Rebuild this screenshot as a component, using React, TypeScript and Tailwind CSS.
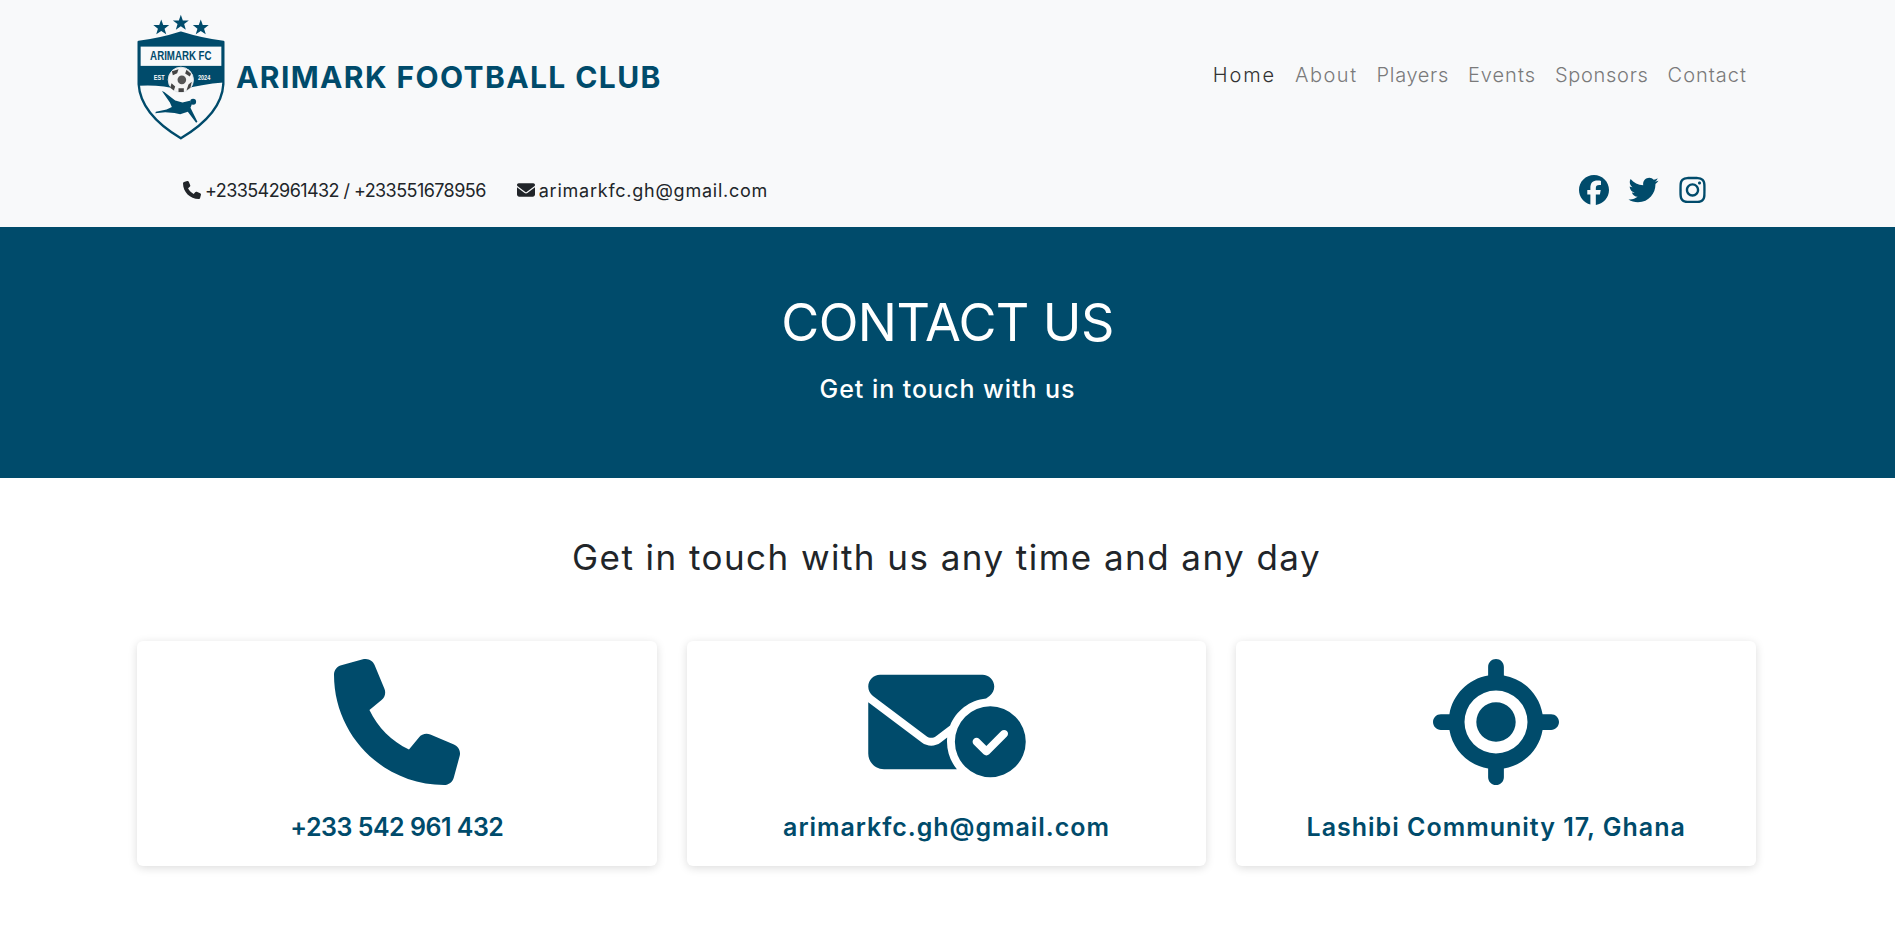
import { FaPhone, FaEnvelope, FaFacebook, FaTwitter, FaInstagram, FaEnvelopeCircleCheck, FaLocationCrosshairs } from "react-icons/fa6";

const C = "#004b6b";

function Logo() {
  return (
    <svg width="88" height="127" viewBox="35 25 265 380" className="shrink-0">
      <g fill={C}>
        <polygon points="108,40 114,57 132,57 118,68 123,85 108,75 93,85 98,68 84,57 102,57" />
        <polygon points="167,26 173,43 191,43 177,54 182,71 167,61 152,71 157,54 143,43 161,43" />
        <polygon points="227,40 233,57 251,57 237,68 242,85 227,75 212,85 217,68 203,57 221,57" />
      </g>
      <path d="M40,108 Q105,100 167,80 Q230,100 295,108 L295,235 Q290,325 167,398 Q45,325 40,235 Z" fill="#f8f9fa" stroke={C} strokeWidth="7" strokeLinejoin="round" />
      <path d="M40,108 Q105,100 167,80 Q230,100 295,108 L295,230 Q230,235 167,252 Q100,235 40,240 Z" fill={C} />
      <rect x="46" y="122" width="243" height="58" fill="#f8f9fa" />
      <text transform="translate(167 162) scale(0.79 1)" textAnchor="middle" fill={C} fontSize="37" fontWeight="700" fontFamily="'Liberation Sans', sans-serif">ARIMARK FC</text>
      <text transform="translate(102 222) scale(0.8 1)" textAnchor="middle" fill="#f8f9fa" fontSize="21" fontWeight="700" fontFamily="'Liberation Sans', sans-serif">EST</text>
      <text transform="translate(237 222) scale(0.8 1)" textAnchor="middle" fill="#f8f9fa" fontSize="21" fontWeight="700" fontFamily="'Liberation Sans', sans-serif">2024</text>
      <circle cx="167" cy="222" r="38" fill="#f4f4f4" stroke="#dfe5e8" strokeWidth="3" />
      <circle cx="170" cy="222" r="13" fill="#555" />
      <path d="M140,196 L160,190 L156,202 L143,208 Z M184,192 L198,204 L194,212 L180,203 Z M139,232 L150,242 L146,254 L135,246 Z M190,236 L200,228 L196,246 L184,254 Z M160,247 L176,247 L176,259 L160,259 Z" fill="#444" />
      <circle cx="204" cy="288" r="9" fill={C} />
      <path d="M110,256 L117,259 L150,284 L172,290 L194,285 L200,296 L196,306 L217,348 L213,351 L188,318 L165,326 L148,322 L120,320 L90,323 L92,318 L124,311 L140,304 L134,290 Z" fill={C} />
    </svg>
  );
}

function Card({ icon, text, tracking }: { icon: React.ReactNode; text: string; tracking: string }) {
  return (
    <div className="flex-1 h-[225px] bg-white rounded-md shadow-[0_2px_10px_rgba(0,0,0,0.14)] flex flex-col items-center pt-[18px]">
      <div className="h-[126px] flex items-center justify-center text-[#004b6b]">{icon}</div>
      <p className={`mt-[27px] text-[25px] font-semibold leading-[30px] text-[#004b6b] ${tracking}`}>{text}</p>
    </div>
  );
}

export default function App() {
  return (
    <div className="min-h-[929px] bg-white font-['Inter','Liberation_Sans',sans-serif]">
      <header className="bg-[#f8f9fa] h-[227px] px-[137px]">
        <div className="flex items-center justify-between h-[153px] pt-[1px]">
          <div className="flex items-center gap-[11px]">
            <Logo />
            <span className="text-[30px] font-bold text-[#004b6b] tracking-[1.4px] leading-none">ARIMARK FOOTBALL CLUB</span>
          </div>
          <nav className="flex gap-[19px] pr-[11px] text-[20px] font-light text-[#7a7a7a] -mt-[5px]">
            <a className="text-[#333] tracking-[1.9px]">Home</a>
            <a className="tracking-[1.5px]">About</a>
            <a className="tracking-[0.65px]">Players</a>
            <a className="tracking-[1px]">Events</a>
            <a className="tracking-[0.7px]">Sponsors</a>
            <a className="tracking-[1px]">Contact</a>
          </nav>
        </div>
        <div className="flex items-center justify-between pl-[46px] pr-[51px] h-[74px]">
          <div className="flex items-center gap-[31px] text-[18px] font-normal text-[#212529]">
            <span className="flex items-center gap-[4px] tracking-[-0.57px]"><FaPhone className="w-[18px] h-[18px]" />+233542961432 / +233551678956</span>
            <span className="flex items-center gap-[4px] tracking-[0.76px]"><FaEnvelope className="w-[18px] h-[18px]" />arimarkfc.gh@gmail.com</span>
          </div>
          <div className="flex items-center gap-[19px] text-[#004b6b]">
            <FaFacebook className="w-[30px] h-[30px]" />
            <FaTwitter className="w-[31px] h-[30px]" />
            <FaInstagram className="w-[29px] h-[30px]" />
          </div>
        </div>
      </header>

      <section className="bg-[#004b6b] h-[251px] flex flex-col items-center text-white pt-[65px]">
        <h1 className="text-[52px] font-[420] leading-[62px] tracking-[-0.6px]">CONTACT US</h1>
        <p className="mt-[20px] text-[25px] font-medium leading-[30px] tracking-[0.95px]">Get in touch with us</p>
      </section>

      <section className="pl-[137px] pr-[139px]">
        <h2 className="mt-[58px] text-center text-[35px] font-normal leading-[42px] tracking-[1.45px] text-[#212529]">Get in touch with us any time and any day</h2>
        <div className="mt-[63px] flex gap-[30px]">
          <Card icon={<FaPhone className="w-[126px] h-[126px]" />} text="+233 542 961 432" tracking="tracking-[-0.5px]" />
          <Card icon={<FaEnvelopeCircleCheck className="w-[158px] h-[126px]" />} text="arimarkfc.gh@gmail.com" tracking="tracking-[0.95px]" />
          <Card icon={<FaLocationCrosshairs className="w-[126px] h-[126px]" />} text="Lashibi Community 17, Ghana" tracking="tracking-[1px]" />
        </div>
      </section>
    </div>
  );
}
